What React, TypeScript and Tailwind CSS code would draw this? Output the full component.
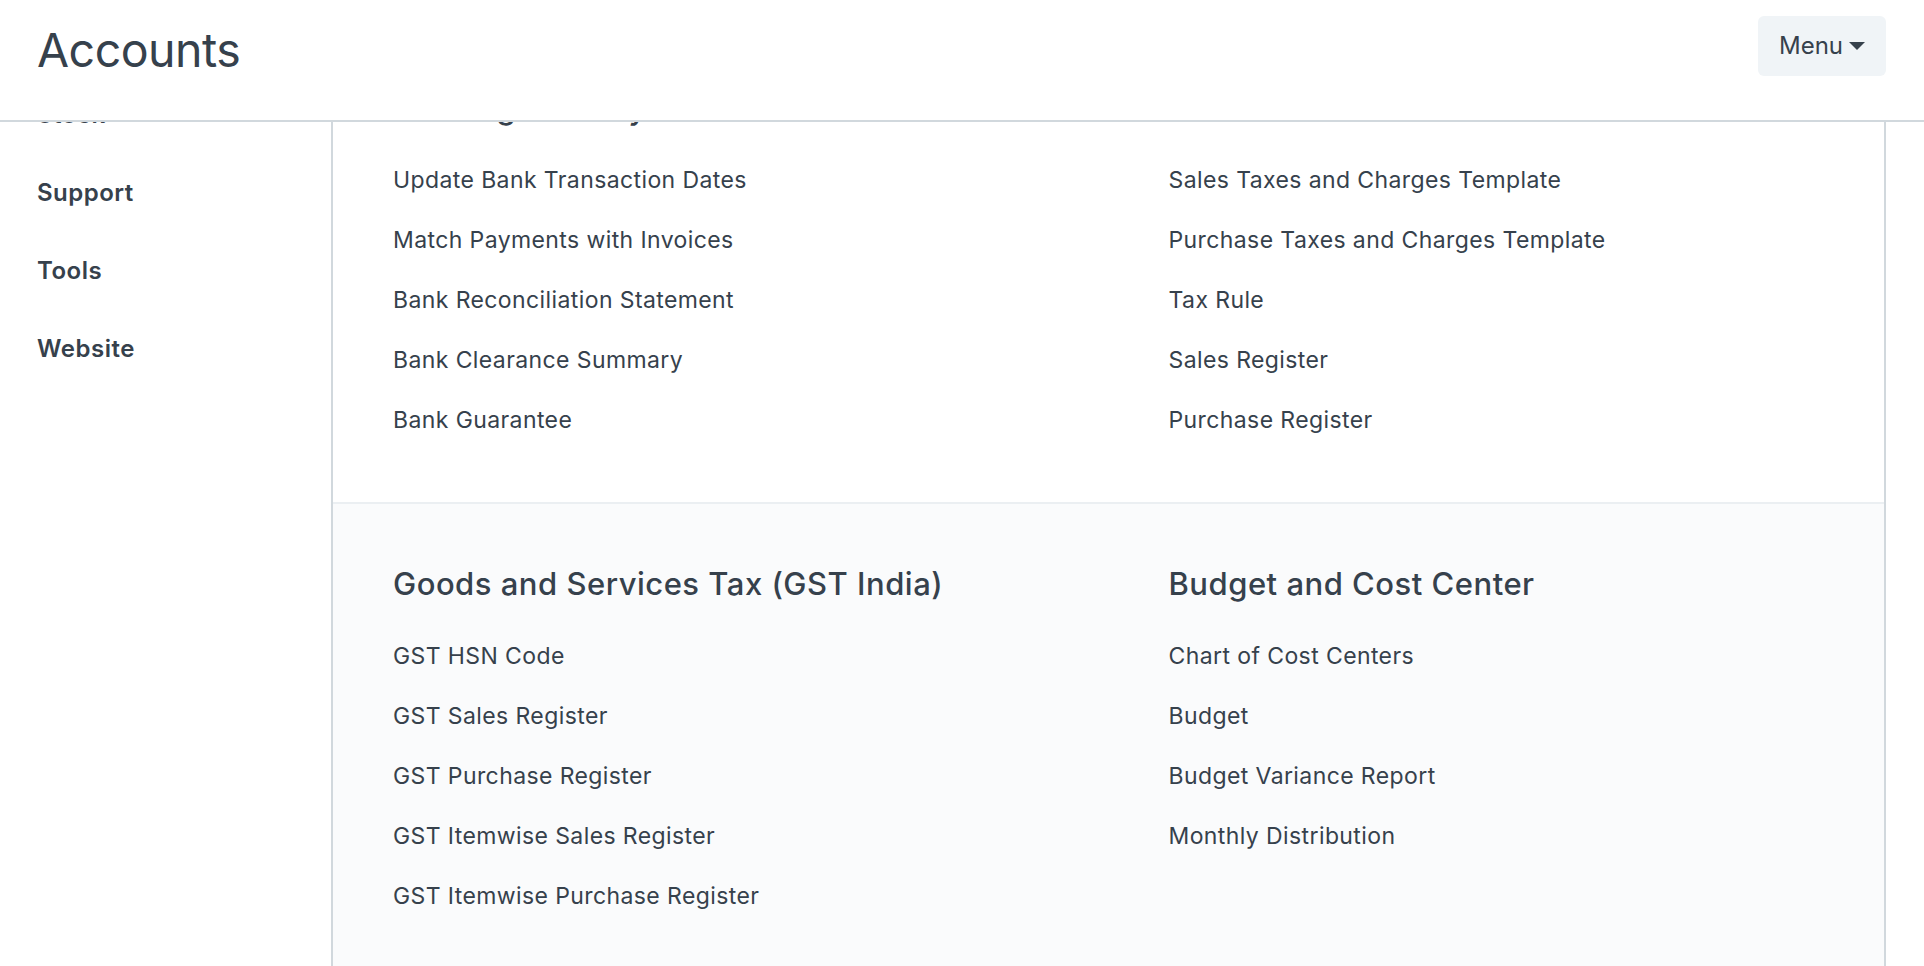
import React from 'react';

const sidebar = ['Stock', 'Support', 'Tools', 'Website'];

type Section = { title: string; items: string[] };

const topRow: Section[] = [
  {
    title: 'Banking and Payments',
    items: [
      'Update Bank Transaction Dates',
      'Match Payments with Invoices',
      'Bank Reconciliation Statement',
      'Bank Clearance Summary',
      'Bank Guarantee',
    ],
  },
  {
    title: 'Taxes',
    items: [
      'Sales Taxes and Charges Template',
      'Purchase Taxes and Charges Template',
      'Tax Rule',
      'Sales Register',
      'Purchase Register',
    ],
  },
];

const bottomRow: Section[] = [
  {
    title: 'Goods and Services Tax (GST India)',
    items: [
      'GST HSN Code',
      'GST Sales Register',
      'GST Purchase Register',
      'GST Itemwise Sales Register',
      'GST Itemwise Purchase Register',
    ],
  },
  {
    title: 'Budget and Cost Center',
    items: ['Chart of Cost Centers', 'Budget', 'Budget Variance Report', 'Monthly Distribution'],
  },
];

function Column({ section }: { section: Section }) {
  return (
    <div className="pl-[60px]">
      <h3 className="text-[31px] leading-[40px] font-medium tracking-[0.5px]">{section.title}</h3>
      <div className="mt-[22px]">
        {section.items.map((item) => (
          <a key={item} href="#" className="flex h-[60px] items-center text-[23px] tracking-[0.4px]">
            {item}
          </a>
        ))}
      </div>
    </div>
  );
}

export default function App() {
  return (
    <div className="h-[966px] overflow-hidden bg-white font-['Inter',sans-serif] text-[#36414c]">
      <header className="flex h-[122px] items-start justify-between border-b-2 border-[#d1d8dd] pl-[37px] pr-[38px]">
        <h1 className="mt-[23px] text-[46.5px] leading-[54px] tracking-[-0.5px]">Accounts</h1>
        <button className="mt-[16px] flex h-[60px] items-center gap-[6px] rounded-[6px] bg-[#f0f4f7] px-[21px] text-[24px]">
          Menu
          <svg width="16" height="8" viewBox="0 0 16 8">
            <path d="M0 0h16L8 8z" fill="#36414c" />
          </svg>
        </button>
      </header>

      <div className="flex h-[844px] overflow-hidden pl-[37px] pr-[38px]">
        <aside className="w-[294px] shrink-0">
          <div className="-mt-[46px]">
            {sidebar.map((s) => (
              <a key={s} href="#" className="flex h-[78px] items-center text-[24px] font-semibold tracking-[0.5px]">
                {s}
              </a>
            ))}
          </div>
        </aside>

        <main className="flex-1 border-x-2 border-[#d1d8dd]">
          <div className="-mt-[94px]">
            <div className="grid grid-cols-2 border-b-2 border-[#ebeff2] pt-[60px] pb-[52px]">
              {topRow.map((s) => (
                <Column key={s.title} section={s} />
              ))}
            </div>
            <div className="grid grid-cols-2 bg-[#fafbfc] pt-[60px] pb-[60px]">
              {bottomRow.map((s) => (
                <Column key={s.title} section={s} />
              ))}
            </div>
          </div>
        </main>
      </div>
    </div>
  );
}
